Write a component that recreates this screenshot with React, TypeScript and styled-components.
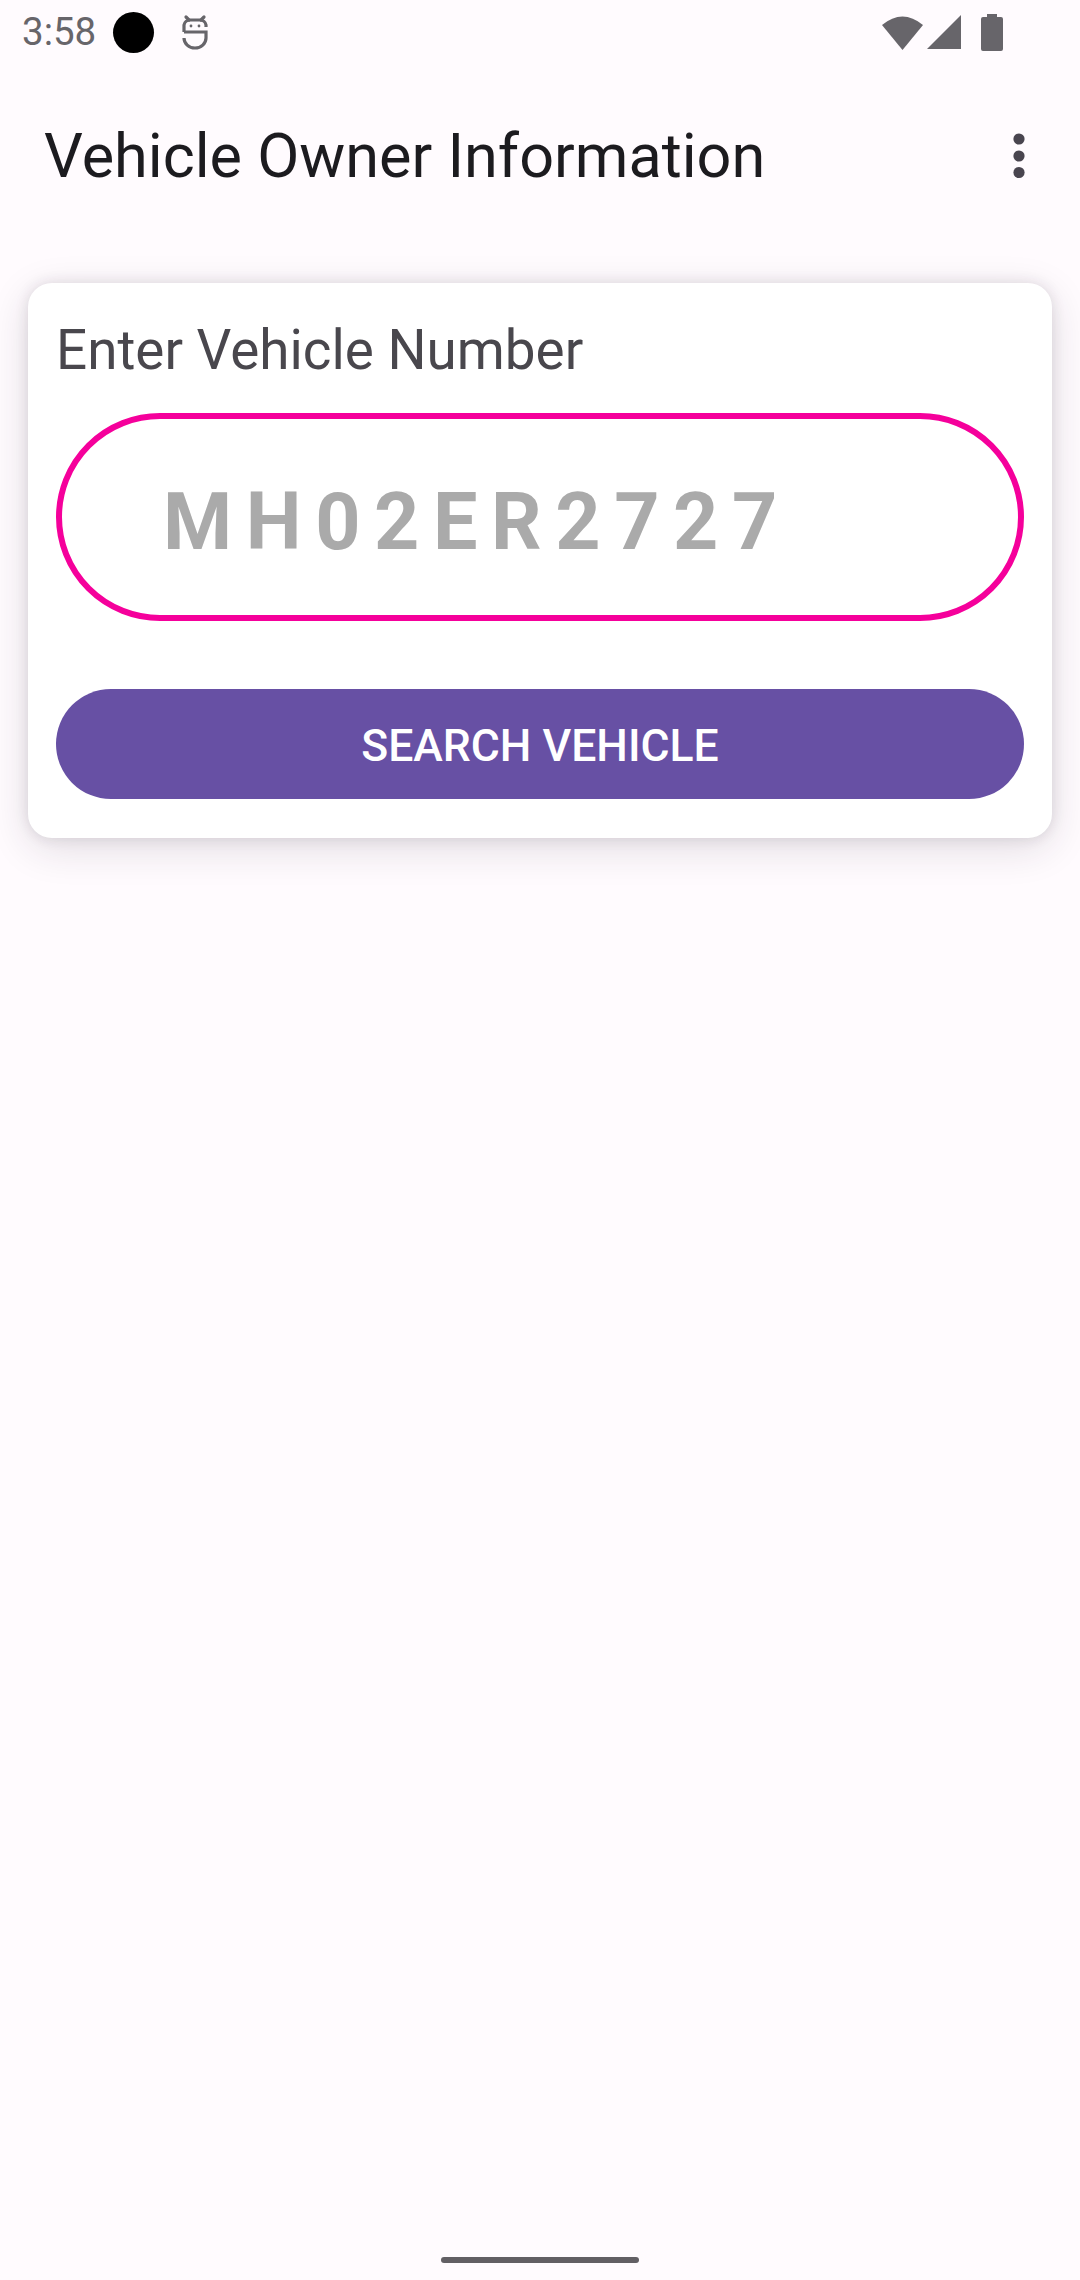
import React from 'react'
import styled, { createGlobalStyle } from 'styled-components'

const GlobalStyle = createGlobalStyle`
	html, body {
		margin: 0;
		padding: 0;
		background: #fffbfe;
	}
`

const Page = styled.div`
	display: flex;
	flex-direction: column;
	width: 1080px;
	height: 2280px;
	overflow: hidden;
	background: #fffbfe;
	font-family: Roboto, "Liberation Sans", sans-serif;
`

const StatusBar = styled.div`
	display: flex;
	align-items: center;
	height: 64px;
	padding: 0 77px 0 22px;
	color: #67656a;
`

const Clock = styled.span`
	font-size: 38.5px;
	line-height: 64px;
	width: 91px;
`

const CameraDot = styled.span`
	width: 41px;
	height: 41px;
	border-radius: 50%;
	background: #000;
	margin-right: 27px;
`

const StatusIcons = styled.div`
	display: flex;
	align-items: center;
	margin-left: auto;
	gap: 4px;
`

const BatterySlot = styled.span`
	display: flex;
	margin-left: 15px;
`

const AppBar = styled.header`
	display: flex;
	align-items: center;
	justify-content: space-between;
	height: 184px;
	padding: 0 55px 0 44px;
`

const Title = styled.h1`
	margin: 0;
	font-size: 61.2px;
	font-weight: 400;
	color: #1c1b1f;
`

const Card = styled.section`
	display: flex;
	flex-direction: column;
	margin: 35px 28px 0;
	height: 555px;
	box-sizing: border-box;
	padding: 35px 28px 0 28px;
	background: #fff;
	border-radius: 24px;
	box-shadow: 0 10px 40px rgba(40, 30, 50, 0.14), 0 0 14px rgba(40, 30, 50, 0.12);
`

const Label = styled.label`
	font-size: 54.8px;
	line-height: 64px;
	color: #49474d;
`

const VehicleField = styled.div`
	display: flex;
	align-items: center;
	box-sizing: border-box;
	height: 208px;
	margin-top: 31px;
	padding: 9px 0 0 101px;
	border: 6px solid #f5009b;
	border-radius: 104px;
`

const Hint = styled.span`
	font-size: 79px;
	font-weight: 700;
	letter-spacing: 13.6px;
	color: #aaaaaa;
`

const SearchButton = styled.button`
	height: 110px;
	margin-top: 68px;
	padding: 3px 0 0;
	border: 0;
	border-radius: 55px;
	background: #6750a4;
	color: #fff;
	font-family: inherit;
	font-size: 44.5px;
	font-weight: 500;
`

const HomeIndicator = styled.div`
	width: 198px;
	height: 6px;
	margin: auto auto 17px;
	border-radius: 3px;
	background: #625f64;
`

function StatusIcon() {
	return (
		<svg width="28" height="36" viewBox="0 0 28 36" fill="none" stroke="#67656a" strokeWidth="3.2">
			<path d="M5 3l3 3M23 3l-3 3" strokeLinecap="round" />
			<path d="M3 18V11a6 6 0 0 1 6-5h10a6 6 0 0 1 6 5v2" />
			<path d="M3 18h22v6a11 10 0 0 1-22 0" />
			<circle cx="10" cy="12" r="1.4" fill="#67656a" stroke="none" />
			<circle cx="18" cy="12" r="1.4" fill="#67656a" stroke="none" />
		</svg>
	)
}

function WifiIcon() {
	return (
		<svg width="41" height="35" viewBox="0 0 41 35" fill="#67656a">
			<path d="M0 10Q20.5 -7 41 10L20.5 35Z" />
		</svg>
	)
}

function SignalIcon() {
	return (
		<svg width="35" height="34" viewBox="0 0 35 34" fill="#67656a">
			<path d="M34 0V34H0Z" />
		</svg>
	)
}

function BatteryIcon() {
	return (
		<svg width="22" height="37" viewBox="0 0 22 37" fill="#67656a">
			<path d="M6 0h10v3h4a2 2 0 0 1 2 2v30a2 2 0 0 1-2 2H2a2 2 0 0 1-2-2V5a2 2 0 0 1 2-2h4Z" />
		</svg>
	)
}

function MoreIcon() {
	return (
		<svg width="12" height="46" viewBox="0 0 12 46" fill="#49454f">
			<circle cx="6" cy="6" r="5.6" />
			<circle cx="6" cy="23" r="5.6" />
			<circle cx="6" cy="39.5" r="5.6" />
		</svg>
	)
}

export default function App() {
	return (
		<Page>
			<GlobalStyle />
			<StatusBar>
				<Clock>3:58</Clock>
				<CameraDot />
				<StatusIcon />
				<StatusIcons>
					<WifiIcon />
					<SignalIcon />
					<BatterySlot>
						<BatteryIcon />
					</BatterySlot>
				</StatusIcons>
			</StatusBar>
			<AppBar>
				<Title>Vehicle Owner Information</Title>
				<MoreIcon />
			</AppBar>
			<Card>
				<Label>Enter Vehicle Number</Label>
				<VehicleField>
					<Hint>MH02ER2727</Hint>
				</VehicleField>
				<SearchButton>SEARCH VEHICLE</SearchButton>
			</Card>
			<HomeIndicator />
		</Page>
	)
}
